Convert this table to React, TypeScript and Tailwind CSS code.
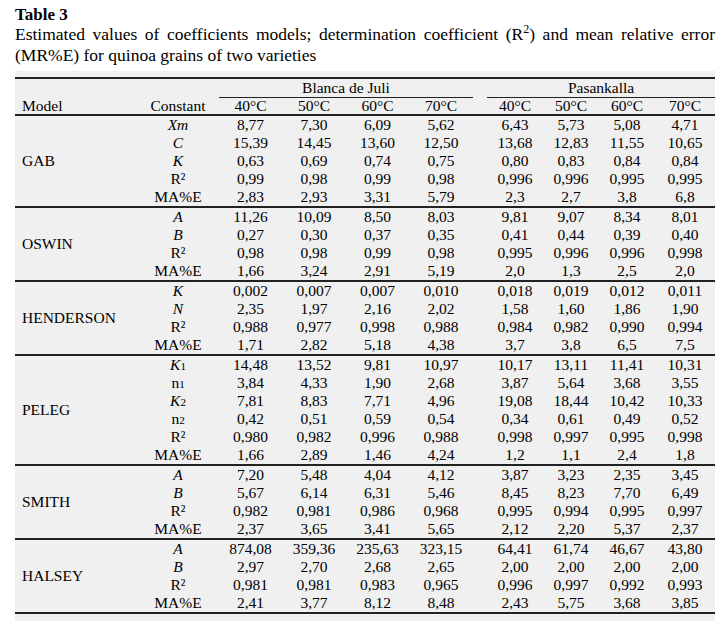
import React from "react";

type Row = { c: React.ReactNode; b: string[]; p: string[] };
type Group = { name: string; rows: Row[] };

const R2 = <span>R²</span>;
const MA = <span>MA%E</span>;
const I = (s: string) => <i>{s}</i>;
const Ksub = (d: string) => (
  <span>
    <i>K</i>
    <span className="text-[11px] leading-none">{d}</span>
  </span>
);
const nsub = (d: string) => (
  <span>
    n<span className="text-[11px] leading-none">{d}</span>
  </span>
);

const groups: Group[] = [
  {
    name: "GAB",
    rows: [
      { c: I("Xm"), b: ["8,77", "7,30", "6,09", "5,62"], p: ["6,43", "5,73", "5,08", "4,71"] },
      { c: I("C"), b: ["15,39", "14,45", "13,60", "12,50"], p: ["13,68", "12,83", "11,55", "10,65"] },
      { c: I("K"), b: ["0,63", "0,69", "0,74", "0,75"], p: ["0,80", "0,83", "0,84", "0,84"] },
      { c: R2, b: ["0,99", "0,98", "0,99", "0,98"], p: ["0,996", "0,996", "0,995", "0,995"] },
      { c: MA, b: ["2,83", "2,93", "3,31", "5,79"], p: ["2,3", "2,7", "3,8", "6,8"] },
    ],
  },
  {
    name: "OSWIN",
    rows: [
      { c: I("A"), b: ["11,26", "10,09", "8,50", "8,03"], p: ["9,81", "9,07", "8,34", "8,01"] },
      { c: I("B"), b: ["0,27", "0,30", "0,37", "0,35"], p: ["0,41", "0,44", "0,39", "0,40"] },
      { c: R2, b: ["0,98", "0,98", "0,99", "0,98"], p: ["0,995", "0,996", "0,996", "0,998"] },
      { c: MA, b: ["1,66", "3,24", "2,91", "5,19"], p: ["2,0", "1,3", "2,5", "2,0"] },
    ],
  },
  {
    name: "HENDERSON",
    rows: [
      { c: I("K"), b: ["0,002", "0,007", "0,007", "0,010"], p: ["0,018", "0,019", "0,012", "0,011"] },
      { c: I("N"), b: ["2,35", "1,97", "2,16", "2,02"], p: ["1,58", "1,60", "1,86", "1,90"] },
      { c: R2, b: ["0,988", "0,977", "0,998", "0,988"], p: ["0,984", "0,982", "0,990", "0,994"] },
      { c: MA, b: ["1,71", "2,82", "5,18", "4,38"], p: ["3,7", "3,8", "6,5", "7,5"] },
    ],
  },
  {
    name: "PELEG",
    rows: [
      { c: Ksub("1"), b: ["14,48", "13,52", "9,81", "10,97"], p: ["10,17", "13,11", "11,41", "10,31"] },
      { c: nsub("1"), b: ["3,84", "4,33", "1,90", "2,68"], p: ["3,87", "5,64", "3,68", "3,55"] },
      { c: Ksub("2"), b: ["7,81", "8,83", "7,71", "4,96"], p: ["19,08", "18,44", "10,42", "10,33"] },
      { c: nsub("2"), b: ["0,42", "0,51", "0,59", "0,54"], p: ["0,34", "0,61", "0,49", "0,52"] },
      { c: R2, b: ["0,980", "0,982", "0,996", "0,988"], p: ["0,998", "0,997", "0,995", "0,998"] },
      { c: MA, b: ["1,66", "2,89", "1,46", "4,24"], p: ["1,2", "1,1", "2,4", "1,8"] },
    ],
  },
  {
    name: "SMITH",
    rows: [
      { c: I("A"), b: ["7,20", "5,48", "4,04", "4,12"], p: ["3,87", "3,23", "2,35", "3,45"] },
      { c: I("B"), b: ["5,67", "6,14", "6,31", "5,46"], p: ["8,45", "8,23", "7,70", "6,49"] },
      { c: R2, b: ["0,982", "0,981", "0,986", "0,968"], p: ["0,995", "0,994", "0,995", "0,997"] },
      { c: MA, b: ["2,37", "3,65", "3,41", "5,65"], p: ["2,12", "2,20", "5,37", "2,37"] },
    ],
  },
  {
    name: "HALSEY",
    rows: [
      { c: I("A"), b: ["874,08", "359,36", "235,63", "323,15"], p: ["64,41", "61,74", "46,67", "43,80"] },
      { c: I("B"), b: ["2,97", "2,70", "2,68", "2,65"], p: ["2,00", "2,00", "2,00", "2,00"] },
      { c: R2, b: ["0,981", "0,981", "0,983", "0,965"], p: ["0,996", "0,997", "0,992", "0,993"] },
      { c: MA, b: ["2,41", "3,77", "8,12", "8,48"], p: ["2,43", "5,75", "3,68", "3,85"] },
    ],
  },
];

const temps = ["40°C", "50°C", "60°C", "70°C"];

export default function App() {
  return (
    <div className="min-h-[621px] w-[725px] bg-white text-black font-['Liberation_Serif','Times_New_Roman',serif]">
      <div className="pl-[15px] w-[715px]">
        <div className="pt-[6px] text-[17px] leading-[17px] font-bold">Table 3</div>
        <div className="text-[17.5px] leading-[21.5px]">
          <div className="text-justify [text-align-last:justify]">
            <span>Estimated values of coefficients models; determination coefficient (R</span>
            <span className="align-super text-[12px] leading-none">2</span>
            <span>) and mean relative error</span>
          </div>
          <div>(MR%E) for quinoa grains of two varieties</div>
        </div>
        <div className="mt-[4px] bg-[#f0f0f0] pt-[6px] pb-[10px]">
          <table className="border-separate border-spacing-0 table-fixed w-[700px] text-[15.5px] leading-[18px]">
            <colgroup>
              <col className="w-[122px]" />
              <col className="w-[82px]" />
              <col className="w-[63px]" />
              <col className="w-[64px]" />
              <col className="w-[63px]" />
              <col className="w-[64px]" />
              <col className="w-[14px]" />
              <col className="w-[56px]" />
              <col className="w-[56px]" />
              <col className="w-[56px]" />
              <col className="w-[60px]" />
            </colgroup>
            <thead>
              <tr className="h-[21px]">
                <th className="p-0 border-t-2 border-[#222]" />
                <th className="p-0 border-t-2 border-[#222]" />
                <th colSpan={4} className="p-0 font-normal text-center border-t-2 border-b border-[#222]">
                  Blanca de Juli
                </th>
                <th className="p-0 border-t-2 border-[#222]" />
                <th colSpan={4} className="p-0 font-normal text-center border-t-2 border-b border-[#222]">
                  Pasankalla
                </th>
              </tr>
              <tr className="h-[18px] leading-[16px]">
                <th className="p-0 pl-[7px] font-normal text-left border-b-2 border-[#222]">Model</th>
                <th className="p-0 font-normal text-center border-b-2 border-[#222]">Constant</th>
                {temps.map((t) => (
                  <th key={"b" + t} className="p-0 font-normal text-center border-b-2 border-[#222]">
                    {t}
                  </th>
                ))}
                <th className="p-0 border-b-2 border-[#222]" />
                {temps.map((t) => (
                  <th key={"p" + t} className="p-0 font-normal text-center border-b-2 border-[#222]">
                    {t}
                  </th>
                ))}
              </tr>
            </thead>
            <tbody>
              {groups.map((g) =>
                g.rows.map((r, i) => {
                  const last = i === g.rows.length - 1;
                  const bd = last ? "border-b-2 border-[#222]" : "";
                  return (
                    <tr key={g.name + i} className={last ? "h-[20px]" : "h-[18px]"}>
                      {i === 0 && (
                        <td
                          rowSpan={g.rows.length}
                          className="p-0 pl-[7px] text-left align-middle border-b-2 border-[#222]"
                        >
                          {g.name}
                        </td>
                      )}
                      <td className={"p-0 text-center " + bd}>{r.c}</td>
                      {r.b.map((v, k) => (
                        <td key={"b" + k} className={"p-0 text-center " + bd}>
                          {v}
                        </td>
                      ))}
                      <td className={"p-0 " + bd} />
                      {r.p.map((v, k) => (
                        <td key={"p" + k} className={"p-0 text-center " + bd}>
                          {v}
                        </td>
                      ))}
                    </tr>
                  );
                })
              )}
            </tbody>
          </table>
        </div>
      </div>
    </div>
  );
}
